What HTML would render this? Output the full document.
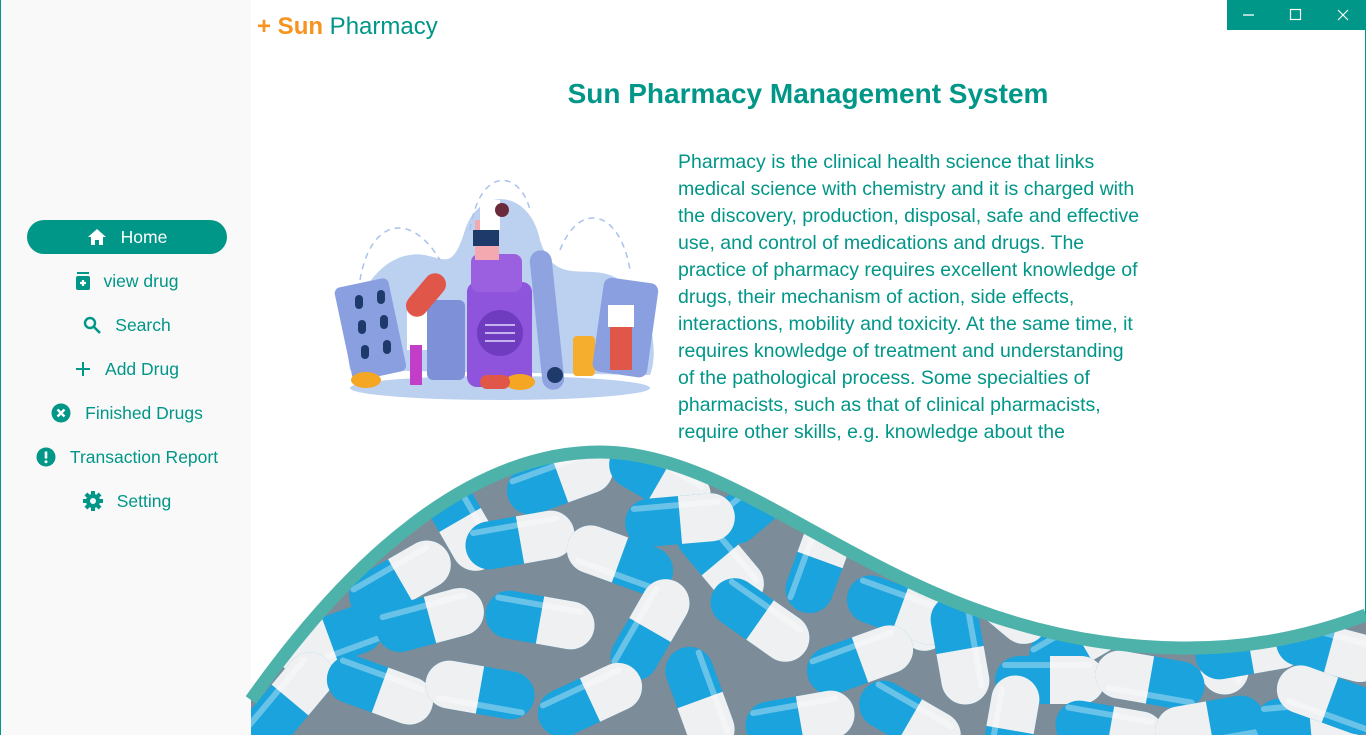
<!DOCTYPE html>
<html><head><meta charset="utf-8"><style>
*{margin:0;padding:0;box-sizing:border-box}
html,body{width:1366px;height:735px;overflow:hidden}
body{background:#fff;font-family:"Liberation Sans",sans-serif;position:relative}
.side{position:absolute;left:0;top:0;width:251px;height:735px;background:#f9f9f9;border-left:1px solid #009688}
.rb{position:absolute;right:0;top:0;width:1px;height:735px;background:#009688}
.item{position:absolute;left:26px;width:200px;height:34px;display:flex;align-items:center;justify-content:center;color:#009688;font-size:17.5px}
.item svg{margin-right:14px}
.home{background:#009688;color:#fff;border-radius:17px}
.logo{position:absolute;left:257px;top:13px;font-size:24px;color:#009688;white-space:nowrap}
.logo b{color:#f7931e}
.ctl{position:absolute;left:1227px;top:0;width:139px;height:30px;background:#009688}
h1{position:absolute;left:250px;width:1116px;text-align:center;top:78px;font-size:28px;color:#009688;font-weight:bold}
p{position:absolute;left:678px;top:149px;width:465px;font-size:19.5px;line-height:27px;color:#009688}
</style></head><body>
<div class="side">
<div class="item home" style="top:220px"><svg width="20" height="18" viewBox="0 0 20 18"><path d="M10 1 L1 9 H4 V17 H8 V12 H12 V17 H16 V9 H19 Z" fill="#fff"/></svg>Home</div>
<div class="item" style="top:264px"><svg width="14" height="18" viewBox="0 0 14 18"><rect x="1" y="0" width="12" height="2" fill="#009688"/><rect x="0" y="4" width="14" height="14" rx="2" fill="#009688"/><path d="M7 8v6M4 11h6" stroke="#fff" stroke-width="2.2"/></svg>view drug</div>
<div class="item" style="top:308px"><svg width="18" height="18" viewBox="0 0 18 18"><circle cx="7" cy="7" r="5" stroke="#009688" stroke-width="2.4" fill="none"/><path d="M11 11 L17 17" stroke="#009688" stroke-width="2.6"/></svg>Search</div>
<div class="item" style="top:352px"><svg width="16" height="16" viewBox="0 0 16 16"><path d="M8 1v14M1 8h14" stroke="#009688" stroke-width="2"/></svg>Add Drug</div>
<div class="item" style="top:396px"><svg width="20" height="20" viewBox="0 0 20 20"><circle cx="10" cy="10" r="9.5" fill="#009688"/><path d="M6.5 6.5l7 7M13.5 6.5l-7 7" stroke="#fff" stroke-width="2.4"/></svg>Finished Drugs</div>
<div class="item" style="top:440px"><svg width="20" height="20" viewBox="0 0 20 20"><circle cx="10" cy="10" r="9.5" fill="#009688"/><path d="M10 4.5v7" stroke="#fff" stroke-width="2.6"/><circle cx="10" cy="14.8" r="1.5" fill="#fff"/></svg>Transaction Report</div>
<div class="item" style="top:484px"><svg width="20" height="20" viewBox="0 0 20 20"><g fill="#009688"><circle cx="10" cy="10" r="7"/><rect x="8" y="0" width="4" height="20"/><rect x="8" y="0" width="4" height="20" transform="rotate(45 10 10)"/><rect x="8" y="0" width="4" height="20" transform="rotate(90 10 10)"/><rect x="8" y="0" width="4" height="20" transform="rotate(135 10 10)"/></g><circle cx="10" cy="10" r="3" fill="#f9f9f9"/></svg>Setting</div>
</div>
<div class="rb"></div>
<div class="logo"><b>+ Sun</b> Pharmacy</div>
<div class="ctl"><svg width="139" height="30"><path d="M16 15h11" stroke="#fff" stroke-width="1.3"/><rect x="63.5" y="9.5" width="10" height="10" stroke="#fff" fill="none" stroke-width="1.2"/><path d="M111 10l10 10M121 10l-10 10" stroke="#fff" stroke-width="1.2"/></svg></div>
<h1>Sun Pharmacy Management System</h1>
<p>Pharmacy is the clinical health science that links medical science with chemistry and it is charged with the discovery, production, disposal, safe and effective use, and control of medications and drugs. The practice of pharmacy requires excellent knowledge of drugs, their mechanism of action, side effects, interactions, mobility and toxicity. At the same time, it requires knowledge of treatment and understanding of the pathological process. Some specialties of pharmacists, such as that of clinical pharmacists, require other skills, e.g. knowledge about the</p>

<svg style="position:absolute;left:330px;top:170px" width="340" height="240" viewBox="0 0 340 240">
<path d="M20 200 C10 150 40 90 80 85 C110 80 120 110 135 60 C150 15 200 20 210 70 C225 120 260 90 290 110 C320 130 330 180 320 205 Z" fill="#bcd0f0"/>
<path d="M30 110 C40 50 80 40 110 90 M140 60 C150 -5 190 0 200 40 M230 80 C250 30 290 40 300 100" stroke="#a9c2ea" stroke-dasharray="6 5" fill="none" stroke-width="1.5"/>
<ellipse cx="170" cy="218" rx="150" ry="12" fill="#bcd0f0"/>
<rect x="13" y="112" width="55" height="95" rx="6" fill="#8a9fe0" transform="rotate(-12 40 160)"/>
<g fill="#1d3a6b"><rect x="25" y="125" width="8" height="14" rx="4"/><rect x="47" y="120" width="8" height="14" rx="4"/><rect x="28" y="150" width="8" height="14" rx="4"/><rect x="50" y="145" width="8" height="14" rx="4"/><rect x="31" y="175" width="8" height="14" rx="4"/><rect x="53" y="170" width="8" height="14" rx="4"/></g>
<rect x="97" y="130" width="38" height="80" rx="6" fill="#7e90d8"/>
<rect x="137" y="112" width="65" height="105" rx="10" fill="#8e54dc"/>
<rect x="141" y="84" width="51" height="38" rx="8" fill="#9a60e0"/>
<circle cx="170" cy="163" r="23" fill="#6f3cc0"/>
<path d="M155 155h30M155 163h30M155 171h30" stroke="#e0d8ff" stroke-width="1.5"/>
<rect x="206" y="80" width="22" height="140" rx="11" fill="#8fa3e0" transform="rotate(-6 217 150)"/>
<circle cx="225" cy="205" r="8" fill="#1d3a6b"/>
<rect x="243" y="166" width="22" height="40" rx="4" fill="#f5ae2d"/>
<rect x="268" y="110" width="55" height="95" rx="8" fill="#8a9fe0" transform="rotate(8 295 157)"/>
<rect x="77" y="130" width="20" height="50" fill="#fff"/><rect x="80" y="175" width="12" height="40" fill="#c23ec8"/>
<rect x="85" y="100" width="22" height="50" rx="11" fill="#e0574a" transform="rotate(40 96 125)"/>
<rect x="145" y="50" width="24" height="40" fill="#f4a8b0"/><rect x="150" y="30" width="20" height="30" fill="#fff"/><rect x="143" y="60" width="26" height="16" fill="#1d3a6b"/>
<circle cx="172" cy="40" r="7" fill="#6a2a3a"/>
<rect x="280" y="150" width="22" height="50" fill="#e0574a"/><rect x="278" y="135" width="26" height="22" fill="#fff"/>
<ellipse cx="36" cy="210" rx="15" ry="8" fill="#f5a623"/><ellipse cx="190" cy="212" rx="15" ry="8" fill="#f5a623"/>
<rect x="150" y="205" width="30" height="14" rx="7" fill="#e0574a"/>
</svg>

<svg style="position:absolute;left:0;top:0" width="1366" height="735">
<defs>
<clipPath id="c"><path d="M251,700 C350,560 470,452 600,452 C760,452 900,645 1180,648 C1260,649 1320,632 1366,615 L1366,735 L251,735 Z"/></clipPath>
<g id="p"><rect x="-55" y="-24" width="110" height="48" rx="24" fill="#1aa3dc"/><path d="M0,-24 H31 A24,24 0 0 1 31,24 H0 Z" fill="#eef0f2"/><rect x="-48" y="-18" width="90" height="6" rx="3" fill="#fff" opacity=".35"/></g>
</defs>
<g clip-path="url(#c)">
<rect x="251" y="440" width="1115" height="300" fill="#7d8c99"/>
<g>
<use href="#p" transform="translate(1080,640) rotate(-30)"/><use href="#p" transform="translate(1230,640) rotate(100)"/><use href="#p" transform="translate(940,600) rotate(120)"/>
<use href="#p" transform="translate(560,480) rotate(-20)"/><use href="#p" transform="translate(660,480) rotate(30)"/><use href="#p" transform="translate(760,500) rotate(-40)"/><use href="#p" transform="translate(460,520) rotate(60)"/><use href="#p" transform="translate(520,540) rotate(-10)"/>
<use href="#p" transform="translate(620,560) rotate(200)"/><use href="#p" transform="translate(720,560) rotate(50)"/><use href="#p" transform="translate(820,560) rotate(-70)"/><use href="#p" transform="translate(400,580) rotate(-30)"/><use href="#p" transform="translate(900,610) rotate(20)"/>
<use href="#p" transform="translate(330,640) rotate(160)"/><use href="#p" transform="translate(430,620) rotate(-15)"/><use href="#p" transform="translate(540,620) rotate(10)"/><use href="#p" transform="translate(650,630) rotate(-60)"/><use href="#p" transform="translate(760,620) rotate(35)"/>
<use href="#p" transform="translate(860,660) rotate(-20)"/><use href="#p" transform="translate(960,650) rotate(80)"/><use href="#p" transform="translate(1050,680) rotate(0)"/><use href="#p" transform="translate(1150,680) rotate(190)"/><use href="#p" transform="translate(1250,650) rotate(-10)"/>
<use href="#p" transform="translate(1330,650) rotate(15)"/><use href="#p" transform="translate(290,700) rotate(-50)"/><use href="#p" transform="translate(380,690) rotate(20)"/><use href="#p" transform="translate(480,690) rotate(190)"/><use href="#p" transform="translate(590,700) rotate(-25)"/>
<use href="#p" transform="translate(700,700) rotate(70)"/><use href="#p" transform="translate(800,720) rotate(-10)"/><use href="#p" transform="translate(910,720) rotate(30)"/><use href="#p" transform="translate(1010,730) rotate(-80)"/><use href="#p" transform="translate(1110,730) rotate(10)"/>
<use href="#p" transform="translate(1210,725) rotate(170)"/><use href="#p" transform="translate(1310,720) rotate(-5)"/><use href="#p" transform="translate(1000,600) rotate(40)"/><use href="#p" transform="translate(1330,700) rotate(200)"/><use href="#p" transform="translate(680,520) rotate(-5)"/>
</g>
</g>
<path d="M251,700 C350,560 470,452 600,452 C760,452 900,645 1180,648 C1260,649 1320,632 1366,615" stroke="#4db3aa" stroke-width="13" fill="none"/>
</svg>
</body></html>
